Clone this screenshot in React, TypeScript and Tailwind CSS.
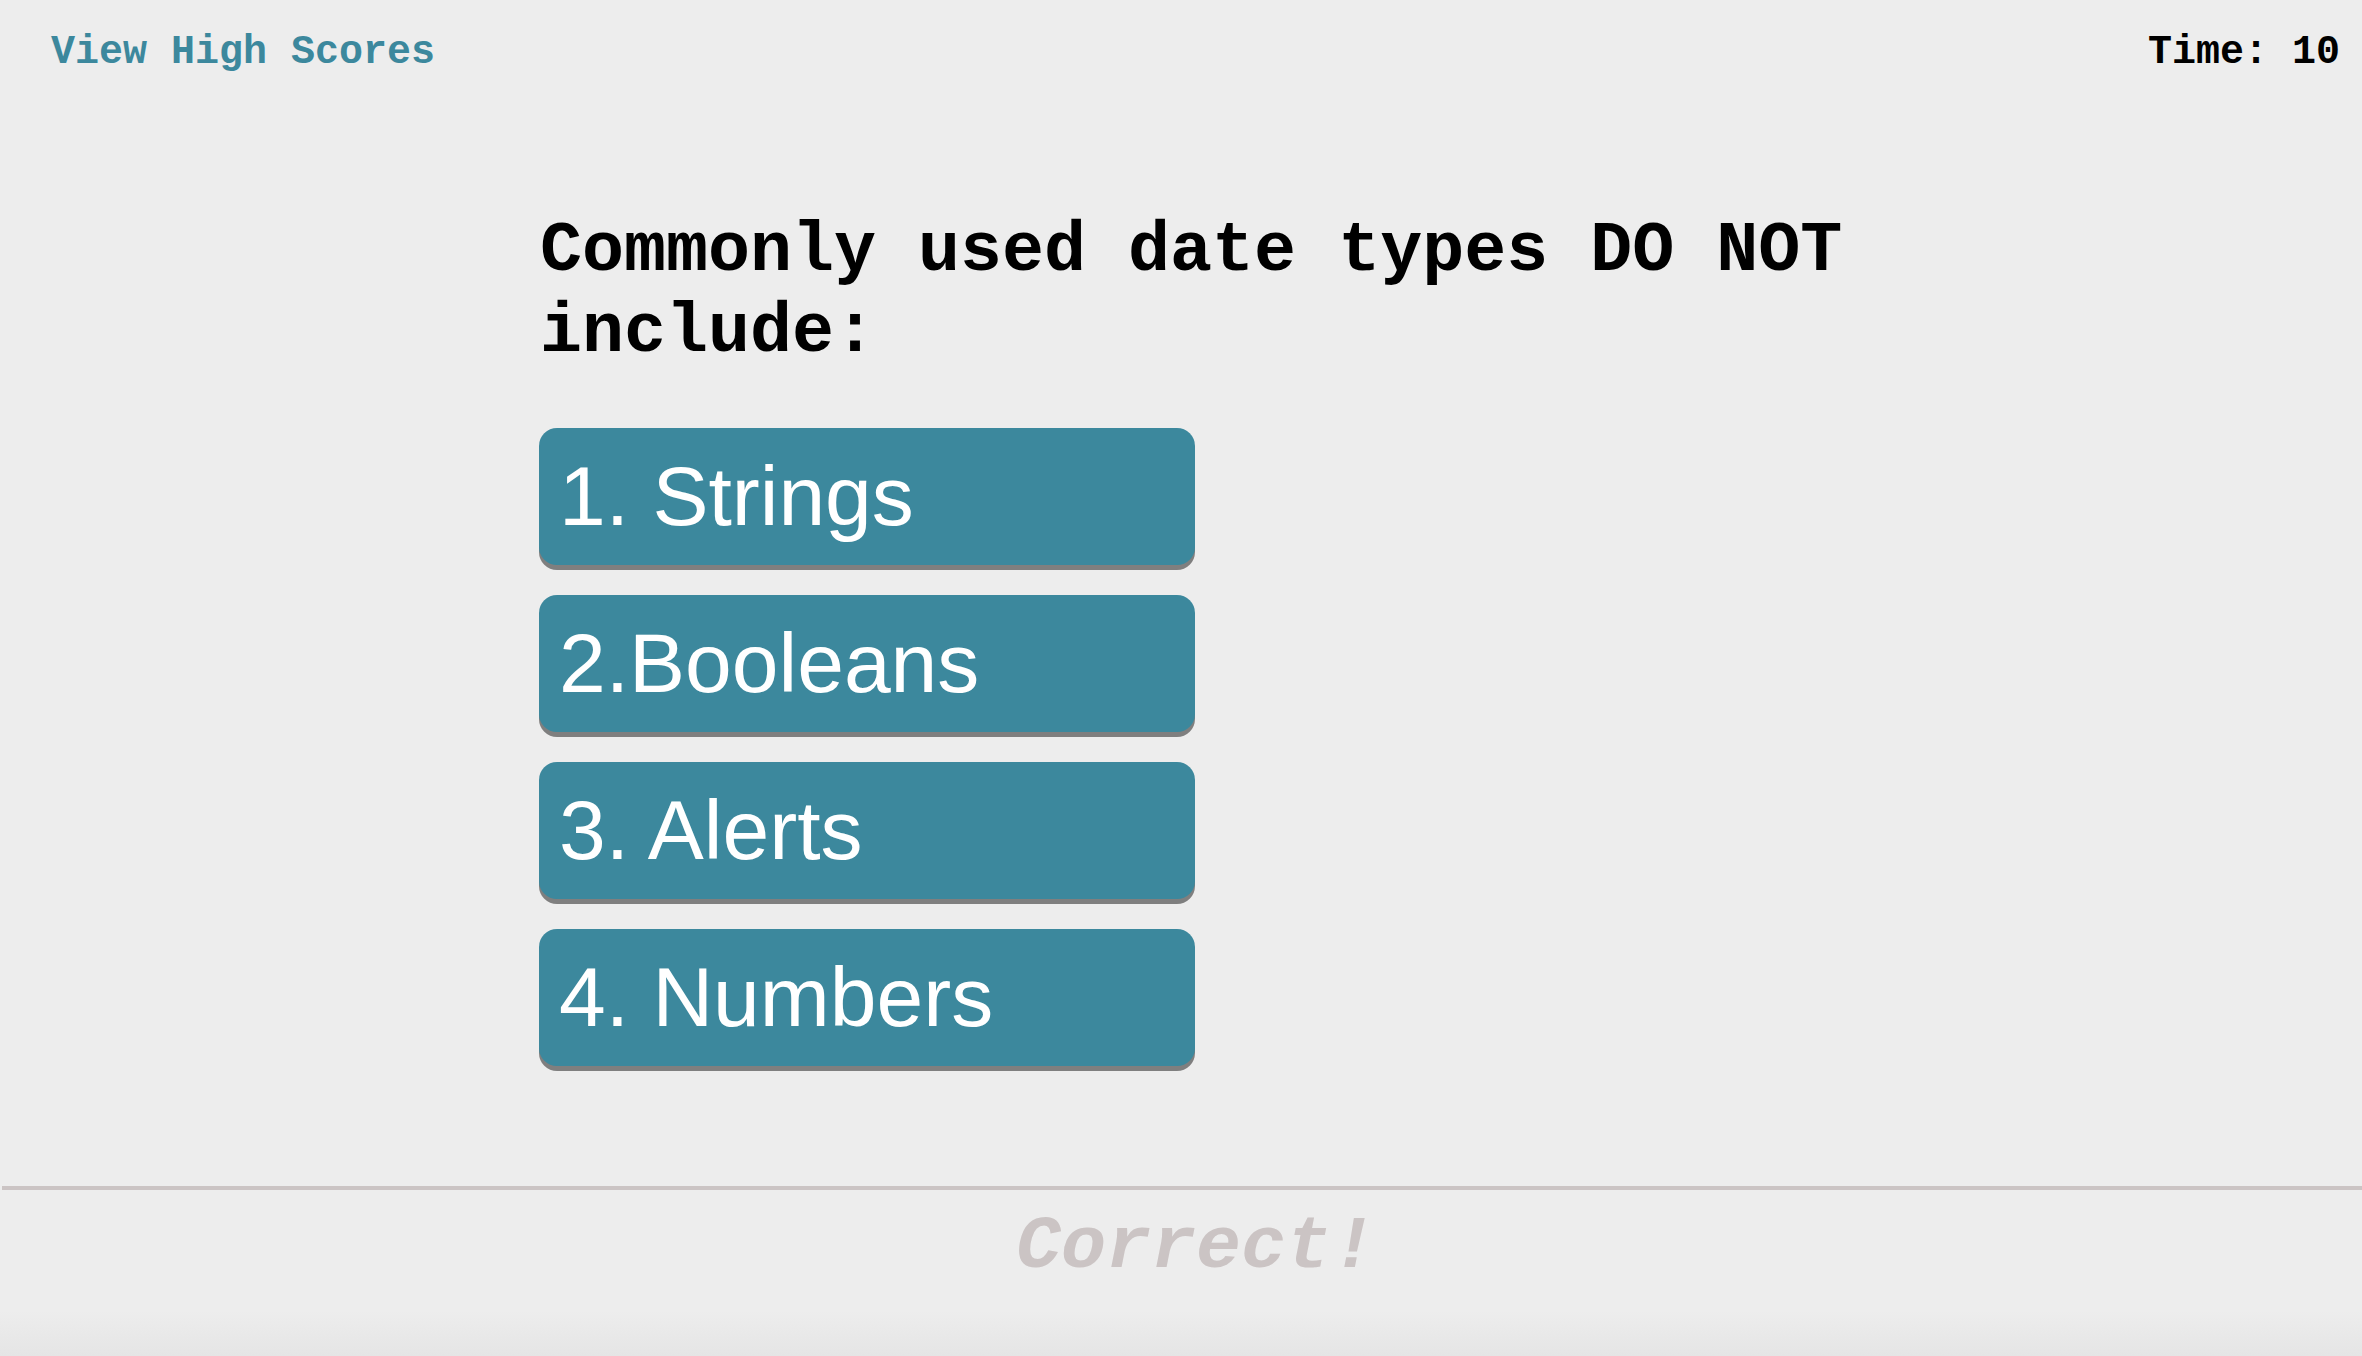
import React from 'react';

const answers = ['1. Strings', '2.Booleans', '3. Alerts', '4. Numbers'];

const mono = "font-['Liberation_Mono','Courier_New',monospace]";

const AnswerButton: React.FC<{ label: string }> = ({ label }) => {
  return (
    <button className="flex items-center h-[137px] w-[656px] rounded-[18px] bg-[#3c889d] pl-[20px] text-left text-white text-[84px] leading-[97px] font-['Liberation_Sans',Arial,sans-serif] shadow-[0_5px_0_#7f7f7f]">
      {label}
    </button>
  );
};

export default function App() {
  return (
    <div className="relative h-[1356px] overflow-hidden bg-[#ededed] flex flex-col">
      <header className={`flex justify-between pl-[51px] pr-[22px] pt-[30px] text-[40px] leading-[45px] font-bold ${mono}`}>
        <a href="#" className="text-[#3c889d]">View High Scores</a>
        <span className="text-black">Time: 10</span>
      </header>

      <main className="ml-[540px] w-[1330px] mt-[136px]">
        <h1 className={`text-[70px] leading-[81px] font-bold text-black ${mono}`}>
          Commonly used date types DO NOT include:
        </h1>
        <div className="mt-[55px] -ml-px flex flex-col gap-[30px]">
          {answers.map((a) => (
            <AnswerButton key={a} label={a} />
          ))}
        </div>
      </main>

      <div className="mt-[120px] ml-[2px] h-[4px] bg-[#cbc4c4]" />
      <p className={`mt-[15px] pl-[30px] text-center text-[75px] leading-[85px] font-bold italic text-[#cbc4c4] ${mono}`}>
        Correct!
      </p>

      <div className="absolute bottom-0 left-0 right-0 h-[45px] bg-gradient-to-b from-[#ededed] to-[#e5e5e5]" />
    </div>
  );
}
